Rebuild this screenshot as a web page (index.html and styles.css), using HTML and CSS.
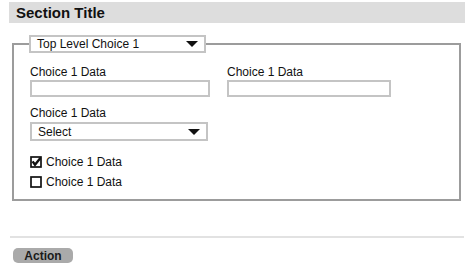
FILE: index.html
```html
<!DOCTYPE html>
<html lang="en">
<head>
  <meta charset="UTF-8" />
  <title>Section Title</title>
  <link rel="stylesheet" href="styles.css">
</head>
<body>
  <div class="page">
    <div class="section-title">Section Title</div>
    <fieldset class="group">
      <legend class="top-choice">
        <span>Top Level Choice 1</span>
        <span class="arrow"></span>
      </legend>
      <div class="row">
        <div class="field wide">
          <div class="label">Choice 1 Data</div>
          <div class="text-input"></div>
        </div>
        <div class="field narrow">
          <div class="label">Choice 1 Data</div>
          <div class="text-input"></div>
        </div>
      </div>
      <div class="field select-field">
        <div class="label">Choice 1 Data</div>
        <div class="select">
          <span>Select</span>
          <span class="arrow"></span>
        </div>
      </div>
      <div class="checks">
        <div class="check">
          <svg width="12" height="12" viewBox="0 0 12 12">
            <rect x="1" y="1" width="10" height="10" fill="none" stroke="#111" stroke-width="1.7" />
            <path d="M2.6 5.4 L5 8.8 L10.4 2" fill="none" stroke="#111" stroke-width="2.4" />
          </svg>
          <span>Choice 1 Data</span>
        </div>
        <div class="check">
          <svg width="12" height="12" viewBox="0 0 12 12">
            <rect x="1" y="1" width="10" height="10" fill="none" stroke="#111" stroke-width="1.7" />
          </svg>
          <span>Choice 1 Data</span>
        </div>
      </div>
    </fieldset>
    <div class="divider"></div>
    <div class="action">Action</div>
  </div>
</body>
</html>
```

FILE: styles.css
```css
/* Base styles */
body {
  margin: 0;
  background-color: white;
  color: #111;
  font-family: "Liberation Sans", Arial, sans-serif;
  font-size: 12px;
}
.page {
  padding: 2px 9px 0 9px;
}
.section-title {
  height: 21px;
  line-height: 22px;
  padding-left: 7px;
  background-color: #dddddd;
  font-size: 15px;
  font-weight: 700;
}

/* Group box */
.group {
  margin: 12px 4px 0 3px;
  padding: 12px 16px 7px 16px;
  border: 2px solid #9c9c9c;
  min-width: 0;
}
.top-choice {
  display: flex;
  align-items: center;
  justify-content: space-between;
  box-sizing: border-box;
  width: 177px;
  height: 18px;
  margin-left: -1px;
  padding: 0 6px 0 6px;
  border: 2px solid #c4c4c4;
  background-color: white;
}
.arrow {
  width: 0;
  height: 0;
  border-left: 6px solid transparent;
  border-right: 6px solid transparent;
  border-top: 6px solid #111;
}

/* Fields */
.row {
  display: flex;
  gap: 17px;
}
.field .label {
  line-height: 14px;
  margin-bottom: 1px;
}
.wide { width: 180px; }
.narrow { width: 164px; }
.text-input {
  box-sizing: border-box;
  height: 17px;
  border: 2px solid #c4c4c4;
}
.select-field {
  margin-top: 9px;
  width: 178px;
}
.select-field .label {
  margin-bottom: 2px;
}
.select {
  display: flex;
  align-items: center;
  justify-content: space-between;
  box-sizing: border-box;
  height: 19px;
  padding: 0 6px 0 6px;
  border: 2px solid #c4c4c4;
}

/* Checkboxes */
.checks {
  margin-top: 11px;
}
.check {
  display: flex;
  align-items: center;
  gap: 4px;
  height: 20px;
}

/* Footer */
.divider {
  height: 2px;
  margin: 35px 1px 0 1px;
  background-color: #e2e2e2;
}
.action {
  width: 60px;
  height: 15px;
  margin: 10px 0 0 4px;
  line-height: 16px;
  border-radius: 5px;
  background-color: #aaaaaa;
  font-weight: 700;
  text-align: center;
  color: #1a1a1a;
}
```
